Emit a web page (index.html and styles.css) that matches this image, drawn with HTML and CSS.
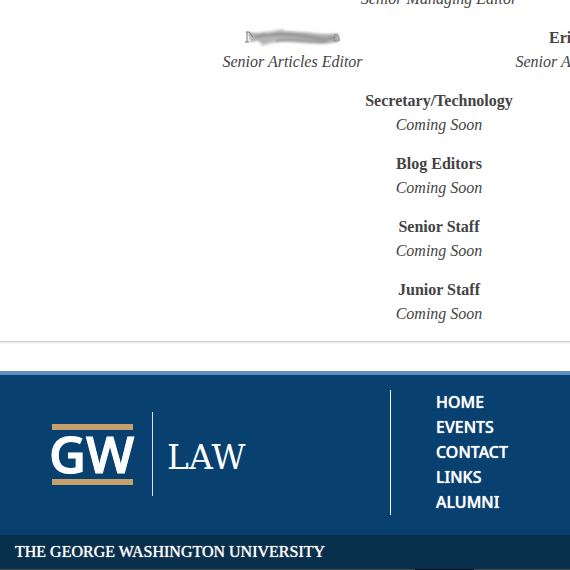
FILE: index.html
```html
<!DOCTYPE html>
<html lang="en">
<head>
<meta charset="utf-8">
<title>GW Law</title>
<link rel="stylesheet" href="styles.css">
</head>
<body>
<main class="staff">
  <section class="entry"><p class="role">Senior Managing Editor</p></section>
  <div class="pair">
    <section class="entry">
      <h2 class="name redacted">
        <svg width="98" height="20" viewBox="0 0 98 20" role="img" aria-label="Name withheld">
          <defs><filter id="soft" x="-10%" y="-30%" width="120%" height="160%"><feGaussianBlur stdDeviation="1.3"/></filter></defs>
          <g filter="url(#soft)">
            <path d="M4 4L14 5C28 2 45 3 60 4C72 5 82 7 94 5L96 13C85 17 70 16 56 15C43 13 30 14 20 17L14 13L6 14Z" fill="#b4b4b4"/>
            <path d="M11 9C27 5 44 6 60 8S80 13 92 9" fill="none" stroke="#959595" stroke-width="3"/>
            <path d="M32 13C47 9 65 14 84 14" fill="none" stroke="#999" stroke-width="2"/>
            <path d="M22 5C30 3 34 2 40 2M17 17C22 17 26 14 31 13" fill="none" stroke="#ccc" stroke-width="2"/>
          </g>
          <path d="M2 4H5L9 9M3 4V14M1 14H5" fill="none" stroke="#777" stroke-width="1"/>
          <path d="M90 7C93 6 95 7 95 13M90 8V13H94" fill="none" stroke="#888" stroke-width="1"/>
        </svg>
      </h2>
      <p class="role">Senior Articles Editor</p>
    </section>
    <section class="entry">
      <h2 class="name"><span class="partial">Eri</span></h2>
      <p class="role">Senior Articles Editor</p>
    </section>
  </div>
  <section class="entry"><h2 class="name">Secretary/Technology</h2><p class="role">Coming Soon</p></section>
  <section class="entry"><h2 class="name">Blog Editors</h2><p class="role">Coming Soon</p></section>
  <section class="entry"><h2 class="name">Senior Staff</h2><p class="role">Coming Soon</p></section>
  <section class="entry"><h2 class="name">Junior Staff</h2><p class="role">Coming Soon</p></section>
</main>
<footer class="footer">
  <div class="footer-main">
    <div class="brand">
      <svg width="200" height="88" viewBox="0 0 200 88" role="img" aria-label="GW Law">
        <path d="M2 14H83V20H2ZM2 69H83V75H2Z" fill="#c6a06c"/>
        <path d="M102.500 2V86" stroke="#dce4ea" stroke-width="1"/>
        <text class="logo-gw" x="-1" y="63">GW</text>
        <text class="logo-law" x="117" y="59">LAW</text>
      </svg>
    </div>
    <nav class="links" aria-label="Footer">
      <a href="#home">HOME</a>
      <a href="#events">EVENTS</a>
      <a href="#contact">CONTACT</a>
      <a href="#links">LINKS</a>
      <a href="#alumni">ALUMNI</a>
    </nav>
  </div>
  <p class="university">THE GEORGE WASHINGTON UNIVERSITY</p>
  <div class="edge"><div class="edge-mark"></div></div>
</footer>
</body>
</html>
```
FILE: styles.css
```css
* { box-sizing: border-box; }
body {
  margin: 0;
  overflow: hidden;
  background: #fff;
  color: #444;
  font-family: "Liberation Serif", "Times New Roman", serif;
}
h2, p { margin: 0; }
.staff {
  min-width: 878px;
  margin-top: -13px;
  border-bottom: 1px solid #d0d0d0;
  box-shadow: 0 1px 2px #e4e4e4;
  text-align: center;
}
.entry { padding-bottom: 15px; }
.name, .role {
  height: 24px;
  font-size: 16px;
  line-height: 24px;
}
.role { font-style: italic; }
.pair {
  display: grid;
  grid-template-columns: 1fr 1fr;
  width: 586px;
  margin: 0 auto;
}
.partial {
  display: inline-block;
  width: 73px;
  text-align: left;
}
.redacted {
  display: flex;
  align-items: center;
  justify-content: center;
}
.footer {
  margin-top: 29px;
  border-top: 4px solid #5a8fc3;
  background: #08406f;
  color: #fff;
}
.footer-main {
  display: flex;
  align-items: flex-start;
  padding: 15px 0 20px 50px;
}
.brand {
  width: 340px;
  padding-top: 20px;
}
.brand svg { display: block; }
.logo-gw {
  fill: #fff;
  stroke: #fff;
  stroke-width: 1px;
  font: 600 51px "Open Sans", sans-serif;
}
.logo-law {
  fill: #fff;
  font: 400 33px "DejaVu Serif", serif;
}
.links {
  display: flex;
  flex-direction: column;
  padding-left: 45px;
  border-left: 1px solid #fff;
}
.links a {
  color: #fff;
  font: 500 16px/25px "Noto Sans", "Open Sans", sans-serif;
  text-decoration: none;
  text-shadow: 0 0 1px #fff;
}
.university {
  padding: 5px 15px;
  background: #082f4b;
  font-size: 16px;
  line-height: 24px;
  text-shadow: 0 0 1px #fff;
}
.edge {
  height: 1px;
  padding-left: 415px;
  background: #444b50;
}
.edge-mark {
  width: 59px;
  height: 1px;
  background: #031522;
}
```
